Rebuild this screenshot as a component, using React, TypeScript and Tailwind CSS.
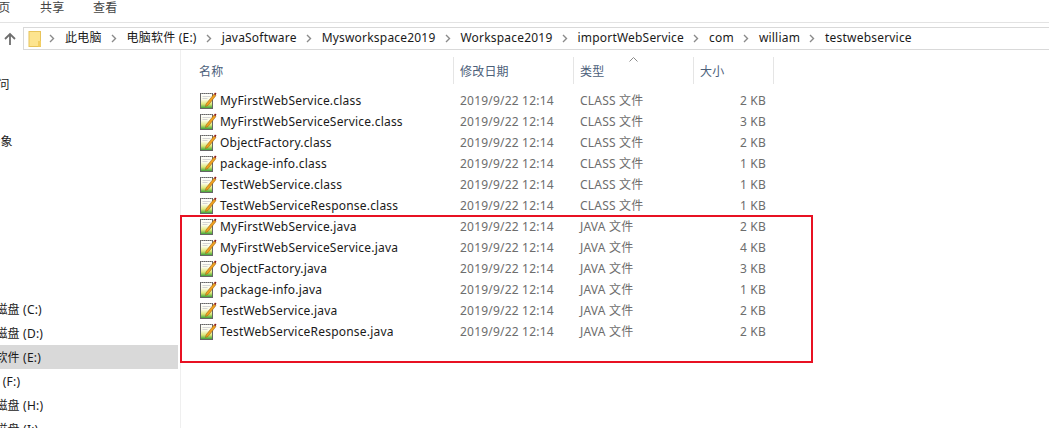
import React from 'react';

const FONT = "font-['Noto_Sans','Noto_Sans_CJK_SC',sans-serif]";

const files = [
  ['MyFirstWebService.class', 'CLASS 文件', '2 KB'],
  ['MyFirstWebServiceService.class', 'CLASS 文件', '3 KB'],
  ['ObjectFactory.class', 'CLASS 文件', '2 KB'],
  ['package-info.class', 'CLASS 文件', '1 KB'],
  ['TestWebService.class', 'CLASS 文件', '1 KB'],
  ['TestWebServiceResponse.class', 'CLASS 文件', '1 KB'],
  ['MyFirstWebService.java', 'JAVA 文件', '2 KB'],
  ['MyFirstWebServiceService.java', 'JAVA 文件', '4 KB'],
  ['ObjectFactory.java', 'JAVA 文件', '3 KB'],
  ['package-info.java', 'JAVA 文件', '1 KB'],
  ['TestWebService.java', 'JAVA 文件', '2 KB'],
  ['TestWebServiceResponse.java', 'JAVA 文件', '2 KB'],
];

const crumbs = ['此电脑', '电脑软件 (E:)', 'javaSoftware', 'Mysworkspace2019', 'Workspace2019', 'importWebService', 'com', 'william', 'testwebservice'];

const Chevron = () => (
  <svg width="6" height="9" viewBox="0 0 6 9" className="shrink-0">
    <path d="M1 1l3.5 3.5L1 8" fill="none" stroke="#8a8a8a" strokeWidth="1.4" />
  </svg>
);

const FileIcon = () => (
  <svg width="17" height="17" viewBox="0 0 17 17" className="shrink-0">
    <defs>
      <linearGradient id="page" x1="0" y1="0" x2="0" y2="1">
        <stop offset="0" stopColor="#ffffff" />
        <stop offset="0.4" stopColor="#fbfbe6" />
        <stop offset="0.7" stopColor="#dfe878" />
        <stop offset="1" stopColor="#2f9e32" />
      </linearGradient>
    </defs>
    <rect x="0.5" y="1.5" width="12" height="15" fill="url(#page)" stroke="#666666" />
    <path d="M1 1.5h11" stroke="#9a9a9a" strokeDasharray="1 1" />
    <path d="M2.5 4.5h8M2.5 6.5h5" stroke="#d4d4d4" />
    <path d="M6 12l8-10 2 1.5-8 10-2.5 1z" fill="#f0a020" stroke="#8a5a10" strokeWidth="0.5" />
    <path d="M14 2l1-1.5 1.5 1-1 1.8z" fill="#8e1b1b" />
  </svg>
);

const NavRow = ({ label, offset, active }: { label: string; offset: string; active?: boolean }) => (
  <div className={`h-6 ${active ? 'bg-[#d9d9d9]' : ''}`}>
    <div className={`h-6 pt-[2px] flex items-center whitespace-nowrap text-[12px] text-[#1a1a1a] ${offset}`}>
      {label}
    </div>
  </div>
);

export default function App() {
  return (
    <div className={`relative w-[1049px] h-[428px] overflow-hidden bg-white flex flex-col tracking-[0.2px] ${FONT}`}>
      {/* ribbon tabs */}
      <div className="h-[23px] shrink-0 flex items-center pb-[6px] text-[12px] text-[#444] border-b border-[#e3e3e3] ml-[-14px]">
        <span className="w-[54px]">主页</span>
        <span className="w-[53px]">共享</span>
        <span>查看</span>
      </div>

      {/* address bar */}
      <div className="h-[27px] shrink-0 flex items-center pt-[4px]">
        <svg width="14" height="14" viewBox="0 0 14 14" className="ml-[3px] mr-[6px] shrink-0">
          <path d="M7 13V2M2 7l5-5 5 5" fill="none" stroke="#6e6e6e" strokeWidth="1.8" />
        </svg>
        <div className="flex-1 h-[23px] border border-[#d9d9d9] border-r-0 flex items-center pl-[4px] text-[12px] text-[#1a1a1a] whitespace-nowrap">
          <svg width="14" height="16" viewBox="0 0 14 16" className="shrink-0 mr-[7px]">
            <rect x="1" y="0.5" width="11.5" height="15" fill="#fde48f" stroke="#e8c45a" />
            <rect x="10" y="10" width="3" height="5.5" fill="#f3cf63" />
          </svg>
          {crumbs.map((c) => (
            <React.Fragment key={c}>
              <Chevron />
              <span className="ml-[10px] mr-[9px] mb-[2px]">{c}</span>
            </React.Fragment>
          ))}
        </div>
      </div>

      <div className="flex-1 flex min-h-0">
        {/* nav pane */}
        <div className="w-[178px] shrink-0 overflow-hidden">
          <div className="h-[22px]" />
          <NavRow label="快速访问" offset="ml-[-39px]" />
          <div className="h-[33px]" />
          <NavRow label="3D 对象" offset="ml-[-31px]" />
          <div className="h-[144px]" />
          <NavRow label="本地磁盘 (C:)" offset="ml-[-29px]" />
          <NavRow label="本地磁盘 (D:)" offset="ml-[-29px]" />
          <NavRow label="电脑软件 (E:)" offset="ml-[-29px]" active />
          <NavRow label="U 盘 (F:)" offset="ml-[-25px]" />
          <NavRow label="本地磁盘 (H:)" offset="ml-[-29px]" />
          <NavRow label="本地磁盘 (I:)" offset="ml-[-29px]" />
        </div>

        {/* file list */}
        <div className="flex-1 border-l border-[#efefef] ml-[2px] pt-[7px]">
          <div className="relative h-[27px] flex items-center text-[12px] text-[#4c607a]">
            <span className="w-[272px] pl-[18px] pt-[2px]">名称</span>
            <span className="w-[120px] pl-[6px] pt-[2px] h-full flex items-center border-l border-[#e5e5e5]">修改日期</span>
            <span className="w-[120px] pl-[6px] pt-[2px] h-full flex items-center border-l border-[#e5e5e5]">类型</span>
            <span className="w-[81px] pl-[6px] pt-[2px] h-full flex items-center border-x border-[#e5e5e5]">大小</span>
            <svg width="9" height="5" viewBox="0 0 9 5" className="absolute left-[448px] top-0">
              <path d="M0.5 4.5l4-4 4 4" fill="none" stroke="#8a8a8a" />
            </svg>
          </div>
          <div className="mt-[6px]">
            {files.map(([name, type, size]) => (
              <div key={name} className="h-[21px] flex items-center text-[12px] whitespace-nowrap">
                <span className="w-[272px] pl-[19px] flex items-center gap-[3px] text-[#1a1a1a]">
                  <FileIcon />
                  {name}
                </span>
                <span className="w-[120px] pl-[7px] text-[#6d6d6d]">2019/9/22 12:14</span>
                <span className="w-[104px] pl-[7px] text-[#6d6d6d]">{type}</span>
                <span className="w-[89px] text-right text-[#6d6d6d]">{size}</span>
              </div>
            ))}
          </div>
        </div>
      </div>

      {/* red annotation box */}
      <div className="absolute left-[180px] top-[215px] w-[633px] h-[148px] border-2 border-[#e81123]" />
    </div>
  );
}
